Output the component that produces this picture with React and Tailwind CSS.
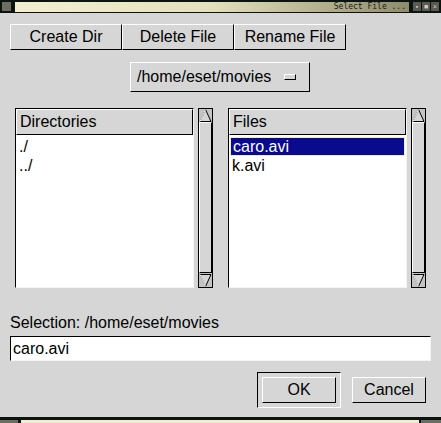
import React from 'react';

const raised = 'border border-t-white border-l-white border-b-black border-r-black';
const sunken = 'border border-t-black border-l-black border-b-[#f4f4f4] border-r-[#f4f4f4]';

function ToolButton({ children, className = '' }) {
  return (
    <div className={`${raised} bg-[#d6d6d6] flex items-center justify-center text-[16px] text-black ${className}`}>
      {children}
    </div>
  );
}

function ScrollBar() {
  return (
    <div className="w-[15px] h-[180px] bg-[#c4c4c4] border border-black flex flex-col">
      {/* up arrow */}
      <div className="h-[13px] flex items-center justify-center">
        <svg width="13" height="13" viewBox="0 0 13 13">
          <path d="M6.5 0.5 L12 12.5 L1 12.5 Z" fill="#d6d6d6" stroke="#000" strokeWidth="1" />
          <path d="M6.5 0.5 L1 12.5" stroke="#fff" strokeWidth="1" />
        </svg>
      </div>
      {/* slider */}
      <div className={`flex-1 ${raised} bg-[#d6d6d6]`} />
      {/* down arrow */}
      <div className="h-[14px] flex items-center justify-center">
        <svg width="13" height="13" viewBox="0 0 13 13">
          <path d="M1 0.5 L12 0.5 L6.5 12.5 Z" fill="#d6d6d6" stroke="#000" strokeWidth="1" />
          <path d="M1 0.5 L6.5 12.5" stroke="#fff" strokeWidth="1" />
        </svg>
      </div>
    </div>
  );
}

function ListPanel({ title, items, selected }) {
  return (
    <div className="flex gap-[4px]">
      <div className={`w-[179px] h-[180px] bg-white ${sunken} flex flex-col`}>
        <div className={`h-[26px] ${raised} bg-[#d6d6d6] flex items-center px-[3px] text-[16px]`}>
          {title}
        </div>
        <div className="flex flex-col pt-[2px] text-[16px] leading-[17px]">
          {items.map((it) => (
            <div
              key={it}
              className={
                it === selected
                  ? 'mx-[1px] px-[2px] bg-[#0a0a8e] text-white border border-[#f0eac0]'
                  : 'px-[3px] py-[1px] text-black'
              }
            >
              {it}
            </div>
          ))}
        </div>
      </div>
      <ScrollBar />
    </div>
  );
}

export default function App() {
  return (
    <div className="w-[441px] h-[423px] bg-[#d6d6d6] flex flex-col overflow-hidden font-['Liberation_Sans',Arial,sans-serif] text-black">
      {/* title bar */}
      <div className="h-[13px] bg-[#0b140e] flex items-center px-[2px] gap-[4px]">
        <div className="w-[9px] h-[9px] bg-[#6d6d62]" />
        <div className="flex-1 h-[10px] bg-gradient-to-r from-[#f2efd0] via-[#e4e0bc] to-[#8e8c6c] flex items-center justify-end pr-[3px]">
          <span className="font-['DejaVu_Sans_Mono',monospace] text-[8px] leading-none text-[#1a1a14]">
            Select File ...
          </span>
        </div>
        <div className="flex gap-[1px]">
          {['▪', '■', '×'].map((g) => (
            <div key={g} className="w-[8px] h-[9px] bg-[#5a5a52] text-[#d0d0c0] text-[7px] leading-[9px] text-center">
              {g}
            </div>
          ))}
        </div>
      </div>

      {/* action buttons */}
      <div className="flex pl-[10px] mt-[11px]">
        <ToolButton className="w-[112px] h-[26px]">Create Dir</ToolButton>
        <ToolButton className="w-[112px] h-[26px]">Delete File</ToolButton>
        <ToolButton className="w-[112px] h-[26px]">Rename File</ToolButton>
      </div>

      {/* path menu */}
      <div className="flex pl-[130px] mt-[12px]">
        <div className={`w-[180px] h-[30px] ${raised} bg-[#d6d6d6] flex items-center pl-[6px] gap-[13px] text-[16px]`}>
          <span>/home/eset/movies</span>
          <div className={`w-[12px] h-[6px] ${raised}`} />
        </div>
      </div>

      {/* lists */}
      <div className="flex pl-[15px] gap-[15px] mt-[16px]">
        <ListPanel title="Directories" items={['./', '../']} />
        <ListPanel title="Files" items={['caro.avi', 'k.avi']} selected="caro.avi" />
      </div>

      {/* selection */}
      <div className="px-[10px] mt-[25px] text-[16px] leading-[20px]">Selection: /home/eset/movies</div>
      <div className="px-[10px] mt-[3px]">
        <div className={`h-[25px] bg-white ${sunken} flex items-center px-[2px] text-[16px]`}>caro.avi</div>
      </div>

      {/* dialog buttons */}
      <div className="flex justify-end items-center pr-[15px] mt-[11px] gap-[11px]">
        <div className="border border-t-black border-l-black border-b-white border-r-white p-[4px]">
          <ToolButton className="w-[74px] h-[26px]">OK</ToolButton>
        </div>
        <ToolButton className="w-[74px] h-[26px]">Cancel</ToolButton>
      </div>

      <div className="flex-1" />
      {/* bottom frame */}
      <div className="h-[6px] bg-[#0b140e] flex items-end">
        <div className="w-[18px] h-[3px] bg-[#6d6d62]" />
        <div className="w-[3px]" />
        <div className="w-[398px] h-[3px] bg-[#f0edd0]" />
        <div className="w-[2px]" />
        <div className="flex-1 h-[3px] bg-[#6d6d62]" />
      </div>
    </div>
  );
}
